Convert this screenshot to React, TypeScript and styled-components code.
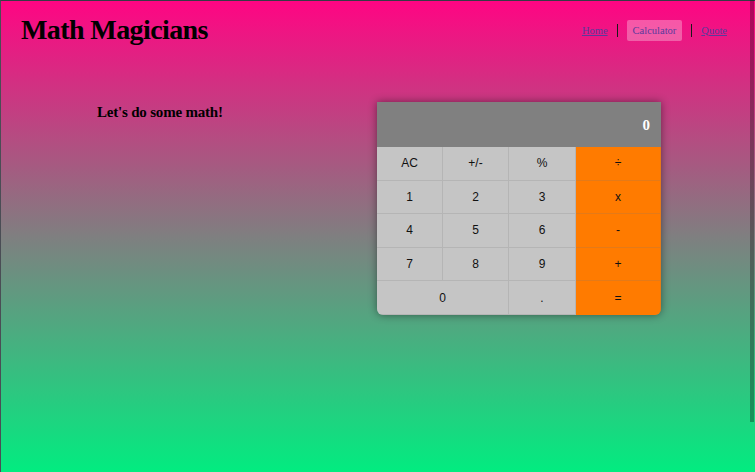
import React from 'react';
import styled, { createGlobalStyle } from 'styled-components';

const GlobalStyle = createGlobalStyle`
  html, body { margin: 0; padding: 0; }
  body { font-family: "Liberation Serif", serif; }
  * { box-sizing: border-box; }
`;

const Page = styled.div`
  min-height: 100vh;
  background: linear-gradient(180deg, #ff0583 0%, #7f7f80 50%, #02ec80 100%);
  border-top: 1px solid #373b45;
  border-left: 1px solid #4a4d55;
  position: relative;
`;

const ScrollThumb = styled.div`
  position: fixed;
  top: 0;
  right: 1px;
  width: 4px;
  height: 422px;
  background: rgba(0, 0, 0, 0.3);
`;

const Header = styled.header`
  display: flex;
  justify-content: space-between;
  align-items: center;
  height: 58px;
  padding: 0 28px 0 20px;
`;

const Title = styled.h1`
  margin: 0;
  font-family: "Liberation Serif", serif;
  font-weight: 700;
  font-size: 28px;
  letter-spacing: -0.6px;
  color: #000;
`;

const Nav = styled.nav`
  display: flex;
  align-items: center;
  gap: 9px;
`;

const NavLink = styled.a<{ $active?: boolean }>`
  font-family: "Liberation Serif", serif;
  font-size: 10.5px;
  color: #5a3a9c;
  text-decoration: ${(p) => (p.$active ? 'none' : 'underline')};
  padding: ${(p) => (p.$active ? '5px 6px' : '0')};
  border-radius: 2px;
  background: ${(p) => (p.$active ? 'rgba(255,255,255,0.3)' : 'transparent')};
`;

const Sep = styled.span`
  width: 1px;
  height: 13px;
  background: #1a1a1a;
`;

const Main = styled.main`
  display: flex;
  align-items: flex-start;
  padding: 43px 94px 0 96px;
`;

const Greeting = styled.h2`
  margin: 2px 0 0;
  font-family: "Liberation Serif", serif;
  font-weight: 700;
  font-size: 15px;
  letter-spacing: -0.2px;
  color: #000;
`;

const Calculator = styled.div`
  margin-left: auto;
  width: 284px;
  border-radius: 0 0 6px 6px;
  overflow: hidden;
  box-shadow: 0 0 9px rgba(0, 0, 0, 0.45);
`;

const Display = styled.div`
  height: 45px;
  background: #808080;
  color: #fff;
  display: flex;
  align-items: center;
  justify-content: flex-end;
  padding: 2px 11px 0 0;
  font-family: "Liberation Serif", serif;
  font-weight: 700;
  font-size: 15px;
`;

const Keys = styled.div`
  display: grid;
  grid-template-columns: 66px 66px 67px 85px;
  grid-auto-rows: 33.6px;
`;

const Key = styled.button<{ $op?: boolean; $span?: number }>`
  grid-column: span ${(p) => p.$span ?? 1};
  border: none;
  border-right: 1px solid rgba(120, 120, 120, 0.2);
  border-bottom: 1px solid rgba(120, 120, 120, 0.2);
  background: ${(p) => (p.$op ? '#ff7b00' : '#c5c5c5')};
  font-family: "Liberation Sans", Arial, sans-serif;
  font-size: 12px;
  color: #111;
  padding: 0;
  &:last-child { border-bottom: none; }
`;

const rows: { label: string; op?: boolean; span?: number }[] = [
  { label: 'AC' }, { label: '+/-' }, { label: '%' }, { label: '÷', op: true },
  { label: '1' }, { label: '2' }, { label: '3' }, { label: 'x', op: true },
  { label: '4' }, { label: '5' }, { label: '6' }, { label: '-', op: true },
  { label: '7' }, { label: '8' }, { label: '9' }, { label: '+', op: true },
  { label: '0', span: 2 }, { label: '.' }, { label: '=', op: true },
];

export default function App() {
  return (
    <>
      <GlobalStyle />
      <Page>
        <Header>
          <Title>Math Magicians</Title>
          <Nav>
            <NavLink href="#">Home</NavLink>
            <Sep />
            <NavLink href="#" $active>Calculator</NavLink>
            <Sep />
            <NavLink href="#">Quote</NavLink>
          </Nav>
        </Header>
        <Main>
          <Greeting>Let's do some math!</Greeting>
          <Calculator>
            <Display>0</Display>
            <Keys>
              {rows.map((k) => (
                <Key key={k.label} $op={k.op} $span={k.span}>{k.label}</Key>
              ))}
            </Keys>
          </Calculator>
        </Main>
        <ScrollThumb />
      </Page>
    </>
  );
}
